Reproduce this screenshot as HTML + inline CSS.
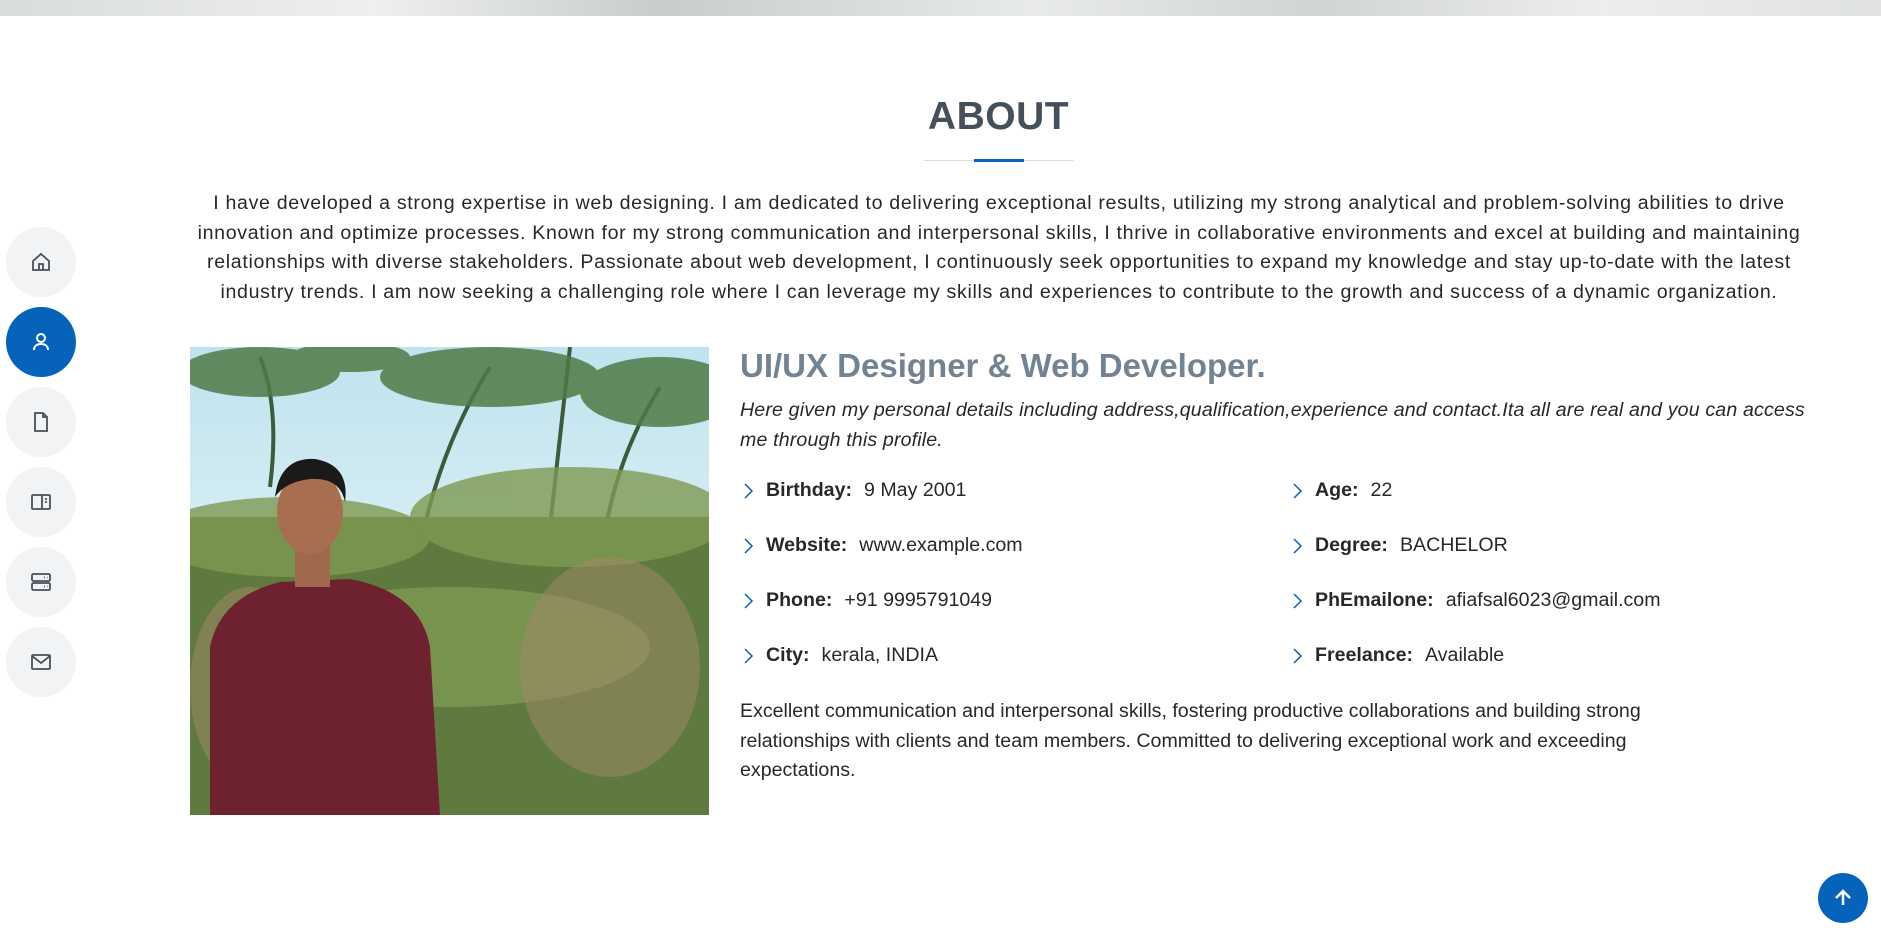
<!DOCTYPE html>
<html><head><meta charset="utf-8"><style>
*{margin:0;padding:0;box-sizing:border-box}
body{width:1881px;height:937px;overflow:hidden;background:#fff;font-family:"Liberation Sans",sans-serif;color:#272829;position:relative}
.top{position:absolute;left:0;top:0;width:1881px;height:16px;background:linear-gradient(90deg,#d8dcda,#eef0ee 20%,#c9cdca 35%,#e8ebe8 55%,#d0d4d2 70%,#eceeee 85%,#dfe2e0)}
h2{position:absolute;left:58px;width:1881px;top:95px;text-align:center;font-size:39px;font-weight:bold;color:#45505b;letter-spacing:0.5px}
.ln{position:absolute;left:924px;top:160px;width:150px;height:1px;background:#ddd}
.bl{position:absolute;left:974px;top:159px;width:50px;height:3px;background:#0563bb}
.intro{position:absolute;left:92px;width:1814px;top:189px;text-align:center;font-size:19.6px;line-height:29.6px;color:#272829;letter-spacing:0.66px;white-space:nowrap}
.nav{position:absolute;left:6px;width:70px;height:70px;border-radius:50%;background:#f2f3f5;display:flex;align-items:center;justify-content:center}
.nav.a{background:#0563bb}
.pic{position:absolute;left:190px;top:347px;width:519px;height:468px;overflow:hidden;background:linear-gradient(#bfe3ee,#d8eef3 45%,#e5f1ee)}
h3{position:absolute;left:740px;top:347px;font-size:33px;font-weight:bold;color:#728394}
.it{position:absolute;left:740px;top:396px;width:1100px;font-style:italic;font-size:19.6px;line-height:29.6px;letter-spacing:0.15px}
.row{position:absolute;font-size:19.6px;display:flex;align-items:center}
.row svg{margin-right:10px}
.row b{margin-right:12px}
.last{position:absolute;left:740px;top:697px;width:1000px;font-size:19.6px;line-height:29.6px}
.up{position:absolute;left:1818px;top:873px;width:50px;height:50px;border-radius:50%;background:#0563bb;display:flex;align-items:center;justify-content:center}
</style></head><body>
<div class="top"></div>
<h2>ABOUT</h2><div class="ln"></div><div class="bl"></div>
<p class="intro">I have developed a strong expertise in web designing. I am dedicated to delivering exceptional results, utilizing my strong analytical and problem-solving abilities to drive<br>innovation and optimize processes. Known for my strong communication and interpersonal skills, I thrive in collaborative environments and excel at building and maintaining<br>relationships with diverse stakeholders. Passionate about web development, I continuously seek opportunities to expand my knowledge and stay up-to-date with the latest<br>industry trends. I am now seeking a challenging role where I can leverage my skills and experiences to contribute to the growth and success of a dynamic organization.</p>

<div class="nav" style="top:227px"><svg width="24" height="24" viewBox="0 0 24 24" fill="none" stroke="#45505b" stroke-width="1.8"><path d="M4 11L12 4l8 7v9H4z"/><path d="M10 20v-6h4v6"/></svg></div>
<div class="nav a" style="top:307px"><svg width="24" height="24" viewBox="0 0 24 24" fill="none" stroke="#fff" stroke-width="2"><circle cx="12" cy="8" r="4"/><path d="M5 20c0-4 3-6 7-6s7 2 7 6"/></svg></div>
<div class="nav" style="top:387px"><svg width="24" height="24" viewBox="0 0 24 24" fill="none" stroke="#45505b" stroke-width="1.8"><path d="M6 3h8l4 4v14H6z"/><path d="M14 3v4h4"/></svg></div>
<div class="nav" style="top:467px"><svg width="24" height="24" viewBox="0 0 24 24" fill="none" stroke="#45505b" stroke-width="1.8"><rect x="3" y="5" width="18" height="14" rx="1"/><path d="M13 5v14M16 9h2M16 12h2"/></svg></div>
<div class="nav" style="top:547px"><svg width="24" height="24" viewBox="0 0 24 24" fill="none" stroke="#45505b" stroke-width="1.8"><rect x="3" y="4" width="18" height="7" rx="1.5"/><rect x="3" y="13" width="18" height="7" rx="1.5"/><path d="M15 7.5h1M18 7.5h0.5M15 16.5h1M18 16.5h0.5"/></svg></div>
<div class="nav" style="top:627px"><svg width="24" height="24" viewBox="0 0 24 24" fill="none" stroke="#45505b" stroke-width="1.8"><rect x="3" y="5" width="18" height="14" rx="1"/><path d="M3 6l9 7 9-7"/></svg></div>

<div class="pic"><svg width="519" height="468" viewBox="0 0 519 468">
<g stroke="#3d5a3a" stroke-width="4" fill="none"><path d="M80 140 Q90 60 70 10"/><path d="M230 200 Q250 100 300 20"/><path d="M410 220 Q420 120 470 40"/><path d="M360 180 L380 0"/></g>
<g fill="#4f7a45" opacity=".85"><ellipse cx="70" cy="25" rx="80" ry="25"/><ellipse cx="300" cy="30" rx="110" ry="30"/><ellipse cx="470" cy="45" rx="80" ry="35"/><ellipse cx="160" cy="10" rx="60" ry="15"/></g>
<rect x="0" y="170" width="519" height="300" fill="#5f7a3e"/>
<g fill="#7d9a52" opacity=".8"><ellipse cx="100" cy="190" rx="140" ry="40"/><ellipse cx="380" cy="170" rx="160" ry="50"/><ellipse cx="260" cy="300" rx="200" ry="60"/></g>
<g fill="#a48a6a" opacity=".5"><ellipse cx="420" cy="320" rx="90" ry="110"/><ellipse cx="60" cy="340" rx="60" ry="100"/></g>
<path d="M20 468 L20 300 Q30 250 90 235 L160 232 Q230 245 240 300 L250 468Z" fill="#6e2230"/>
<rect x="105" y="195" width="35" height="45" fill="#a0694d"/>
<ellipse cx="120" cy="165" rx="33" ry="42" fill="#a86e50"/>
<path d="M85 150 Q90 110 125 112 Q160 118 155 155 Q150 130 120 132 Q95 135 85 150Z" fill="#1a1a1a"/>
</svg></div>

<h3>UI/UX Designer &amp; Web Developer.</h3>
<p class="it">Here given my personal details including address,qualification,experience and contact.Ita all are real and you can access<br>me through this profile.</p>

<div class="row" style="left:742px;top:479px"><svg width="14" height="20" viewBox="0 0 14 20" fill="none" stroke="#0563bb" stroke-width="1.5"><path d="M3 3l7 7-7 7"/></svg><b>Birthday:</b>9 May 2001</div>
<div class="row" style="left:742px;top:534px"><svg width="14" height="20" viewBox="0 0 14 20" fill="none" stroke="#0563bb" stroke-width="1.5"><path d="M3 3l7 7-7 7"/></svg><b>Website:</b>www.example.com</div>
<div class="row" style="left:742px;top:589px"><svg width="14" height="20" viewBox="0 0 14 20" fill="none" stroke="#0563bb" stroke-width="1.5"><path d="M3 3l7 7-7 7"/></svg><b>Phone:</b>+91 9995791049</div>
<div class="row" style="left:742px;top:644px"><svg width="14" height="20" viewBox="0 0 14 20" fill="none" stroke="#0563bb" stroke-width="1.5"><path d="M3 3l7 7-7 7"/></svg><b>City:</b>kerala, INDIA</div>
<div class="row" style="left:1291px;top:479px"><svg width="14" height="20" viewBox="0 0 14 20" fill="none" stroke="#0563bb" stroke-width="1.5"><path d="M3 3l7 7-7 7"/></svg><b>Age:</b>22</div>
<div class="row" style="left:1291px;top:534px"><svg width="14" height="20" viewBox="0 0 14 20" fill="none" stroke="#0563bb" stroke-width="1.5"><path d="M3 3l7 7-7 7"/></svg><b>Degree:</b>BACHELOR</div>
<div class="row" style="left:1291px;top:589px"><svg width="14" height="20" viewBox="0 0 14 20" fill="none" stroke="#0563bb" stroke-width="1.5"><path d="M3 3l7 7-7 7"/></svg><b>PhEmailone:</b>afiafsal6023@gmail.com</div>
<div class="row" style="left:1291px;top:644px"><svg width="14" height="20" viewBox="0 0 14 20" fill="none" stroke="#0563bb" stroke-width="1.5"><path d="M3 3l7 7-7 7"/></svg><b>Freelance:</b>Available</div>

<p class="last">Excellent communication and interpersonal skills, fostering productive collaborations and building strong relationships with clients and team members. Committed to delivering exceptional work and exceeding expectations.</p>

<div class="up"><svg width="24" height="24" viewBox="0 0 24 24" fill="none" stroke="#fff" stroke-width="2.5"><path d="M12 19V5M5 12l7-7 7 7"/></svg></div>
</body></html>
